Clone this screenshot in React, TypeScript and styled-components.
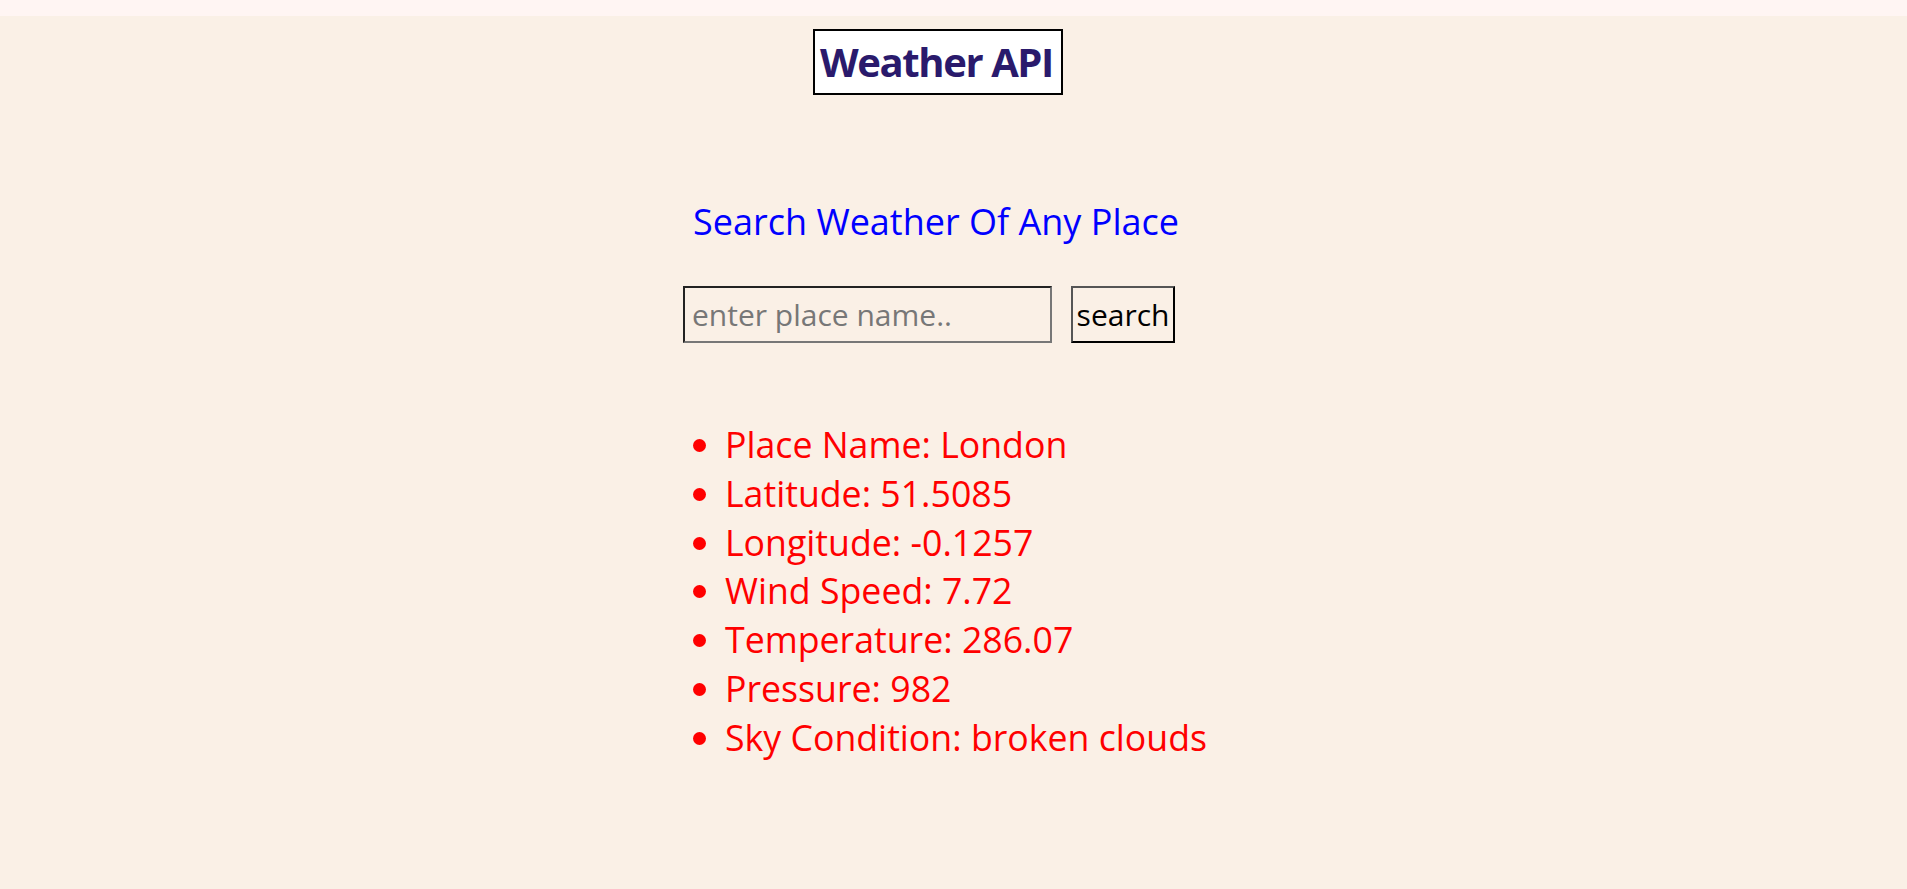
import React from "react";
import styled, { createGlobalStyle } from "styled-components";

const GlobalStyle = createGlobalStyle`
  html, body {
    margin: 0;
    padding: 0;
  }
  body {
    background: #fff5f3;
    font-family: "Open Sans", "Noto Sans", sans-serif;
  }
`;

const Page = styled.div`
  margin-top: 16px;
  min-height: calc(100vh - 16px);
  background: #faf0e6;
  display: flex;
  flex-direction: column;
  align-items: center;
  padding-right: 31px;
  box-sizing: border-box;
`;

const Title = styled.h1`
  margin: 13px 0 0 0;
  padding: 0 8px 0 5px;
  border: 2px solid #000;
  background: #fff;
  color: #2a1a6c;
  font-size: 40px;
  font-weight: 700;
  line-height: 62px;
  letter-spacing: -1.4px;
`;

const Subtitle = styled.h2`
  margin: 103px 4px 0 0;
  color: #0000ff;
  font-size: 36px;
  font-weight: 400;
  line-height: 48px;
`;

const SearchRow = styled.div`
  margin-top: 40px;
  display: flex;
  gap: 19px;
  padding-right: 18px;
`;

const Input = styled.input`
  box-sizing: border-box;
  width: 369px;
  height: 57px;
  border: 2px solid;
  border-color: #222 #777 #777 #222;
  background: transparent;
  padding: 0 7px;
  font-family: inherit;
  font-size: 30px;
  color: #000;
  &::placeholder {
    color: #777;
  }
`;

const Button = styled.button`
  box-sizing: border-box;
  width: 104px;
  height: 57px;
  padding: 0;
  border: 2px solid;
  border-color: #555 #000 #000 #555;
  background: transparent;
  font-family: inherit;
  font-size: 30px;
  color: #000;
  cursor: pointer;
`;

const List = styled.ul`
  margin: 77px 0 0 16px;
  padding-left: 40px;
  color: #ff0000;
  font-size: 35.7px;
  line-height: 48.8px;
`;

const Item = styled.li``;

const data: [string, string][] = [
  ["Place Name", "London"],
  ["Latitude", "51.5085"],
  ["Longitude", "-0.1257"],
  ["Wind Speed", "7.72"],
  ["Temperature", "286.07"],
  ["Pressure", "982"],
  ["Sky Condition", "broken clouds"],
];

export default function App() {
  return (
    <>
      <GlobalStyle />
      <Page>
        <Title>Weather API</Title>
        <Subtitle>Search Weather Of Any Place</Subtitle>
        <SearchRow>
          <Input placeholder="enter place name.." />
          <Button>search</Button>
        </SearchRow>
        <List>
          {data.map(([k, v]) => (
            <Item key={k}>
              {k}: {v}
            </Item>
          ))}
        </List>
      </Page>
    </>
  );
}
